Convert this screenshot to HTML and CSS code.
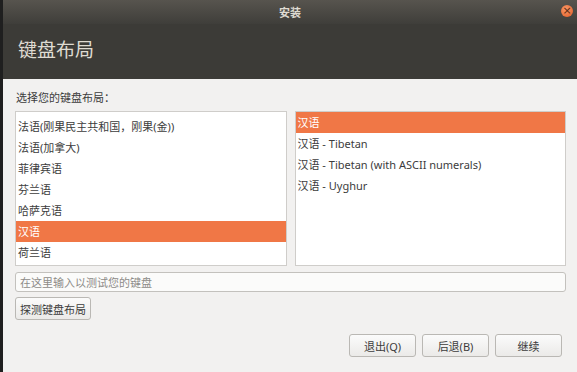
FILE: index.html
```html
<!DOCTYPE html>
<html lang="zh-CN">
<head>
  <meta charset="UTF-8">
  <title>安装</title>
  <link rel="stylesheet" href="styles.css">
</head>
<body>
  <!-- Title Bar -->
  <div class="titlebar">
    <span class="title">安装</span>
    <span class="close-btn">×</span>
  </div>

  <!-- Page Header -->
  <div class="header">键盘布局</div>

  <!-- Main Content -->
  <div class="content">
    <div class="prompt">选择您的键盘布局：</div>

    <div class="lists">
      <div class="list-box">
        <ul class="layout-list">
          <!-- row scrolled mostly out of view -->
          <li class="partial"></li>
          <li>法语(刚果民主共和国，刚果(金))</li>
          <li>法语(加拿大)</li>
          <li>菲律宾语</li>
          <li>芬兰语</li>
          <li>哈萨克语</li>
          <li class="selected">汉语</li>
          <li>荷兰语</li>
        </ul>
      </div>
      <div class="list-box">
        <ul class="layout-list">
          <li class="selected">汉语</li>
          <li>汉语 - Tibetan</li>
          <li>汉语 - Tibetan (with ASCII numerals)</li>
          <li>汉语 - Uyghur</li>
        </ul>
      </div>
    </div>

    <input type="text" class="test-input" placeholder="在这里输入以测试您的键盘">

    <div class="detect-row">
      <button class="btn">探测键盘布局</button>
    </div>

    <div class="actions">
      <button class="btn action-btn">退出(Q)</button>
      <button class="btn action-btn">后退(B)</button>
      <button class="btn action-btn">继续</button>
    </div>
  </div>
</body>
</html>
```

FILE: styles.css
```css
/* Global Styles */
body {
  margin: 0;
  width: 574px;
  height: 372px;
  overflow: hidden;
  border-left: 3px solid #1f1f1f;
  background-color: #f2f1f0;
  color: #3c3c3c;
  font-family: "Noto Sans", "Noto Sans CJK SC", sans-serif;
  font-size: 11px;
}

/* Title Bar */
.titlebar {
  position: relative;
  height: 24px;
  display: flex;
  align-items: center;
  justify-content: center;
  background: linear-gradient(#57544e, #3f3e3a);
}

.title {
  color: #dfdbd2;
  font-weight: bold;
  font-size: 11px;
}

.close-btn {
  position: absolute;
  top: 5px;
  right: 4px;
  width: 12px;
  height: 12px;
  border-radius: 50%;
  background: radial-gradient(circle at 40% 35%, #f89a6a, #e45a24);
  color: #5a2a12;
  font-size: 11px;
  line-height: 11px;
  text-align: center;
  font-family: "DejaVu Sans", sans-serif;
}

/* Header */
.header {
  height: 55px;
  padding-left: 15px;
  background-color: #3c3b37;
  color: #dfdbd2;
  font-size: 19px;
  line-height: 53px;
}

/* Content */
.content {
  padding: 11px 11px 0 12px;
}

.prompt {
  padding-left: 1px;
  line-height: 16px;
  margin-bottom: 5px;
}

.lists {
  display: grid;
  grid-template-columns: 1fr 1fr;
  gap: 8px;
}

.list-box {
  height: 153px;
  border: 1px solid #cfcdca;
  background-color: #ffffff;
  overflow: hidden;
}

.layout-list {
  list-style-type: none;
  margin: 0;
  padding: 0;
}

.layout-list li {
  height: 21px;
  line-height: 21px;
  padding-left: 2px;
  white-space: nowrap;
}

.layout-list li.partial {
  height: 4px;
}

.layout-list li.selected {
  background-color: #f07746;
  color: #ffffff;
}

/* Test Input */
.test-input {
  display: block;
  box-sizing: border-box;
  width: 100%;
  height: 20px;
  margin: 6px 0 0 0;
  padding: 0 4px;
  border: 1px solid #c3c1bd;
  border-radius: 3px;
  background-color: #fbfbfa;
  font-family: inherit;
  font-size: 11px;
}

.test-input::placeholder {
  color: #8d8b88;
}

/* Buttons */
.btn {
  height: 23px;
  padding: 0 4px;
  border: 1px solid #bab8b4;
  border-radius: 3px;
  background: linear-gradient(#fbfbfb, #ebeae8);
  color: #3c3c3c;
  font-family: inherit;
  font-size: 11px;
}

.detect-row {
  margin-top: 5px;
}

.actions {
  display: flex;
  justify-content: flex-end;
  gap: 6px;
  margin-top: 14px;
  padding-right: 4px;
}

.action-btn {
  width: 67px;
}
```
